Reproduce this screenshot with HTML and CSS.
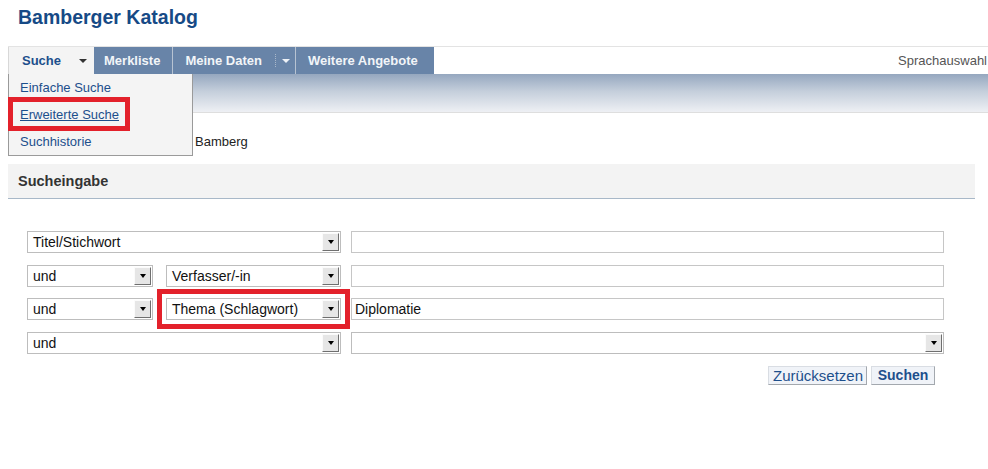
FILE: index.html
```html
<!DOCTYPE html>
<html lang="de">
<head>
<meta charset="utf-8">
<title>Bamberger Katalog</title>
<link rel="stylesheet" href="styles.css">
</head>
<body>
<div class="page">
  <header class="masthead">
    <h1 class="title">Bamberger Katalog</h1>
  </header>

  <nav class="nav">
    <div class="tab tab-active">
      <span class="tab-label">Suche</span><span class="caret caret-dark"></span>
      <ul class="menu">
        <li class="menu-item"><a href="#">Einfache Suche</a></li>
        <li class="menu-item menu-marked"><a href="#" class="menu-current">Erweiterte Suche</a></li>
        <li class="menu-item"><a href="#">Suchhistorie</a></li>
      </ul>
    </div>
    <div class="tab tab-merk"><span class="tab-label">Merkliste</span></div>
    <div class="tab tab-daten"><span class="tab-label">Meine Daten</span><span class="split-sep"></span><span class="caret caret-light"></span></div>
    <div class="tab tab-weitere"><span class="tab-label">Weitere Angebote</span></div>
    <div class="lang">Sprachauswahl</div>
  </nav>

  <div class="band"></div>

  <div class="crumb">Bamberg</div>

  <section class="panel">
    <h2 class="panel-head">Sucheingabe</h2>
    <div class="form-grid">
      <div class="select sel-wide"><span class="sel-text">Titel/Stichwort</span><span class="sel-btn"><span class="tri"></span></span></div>
      <div class="field"></div>

      <div class="select sel-op"><span class="sel-text">und</span><span class="sel-btn"><span class="tri"></span></span></div>
      <div class="select sel-cat"><span class="sel-text">Verfasser/-in</span><span class="sel-btn"><span class="tri"></span></span></div>
      <div class="field"></div>

      <div class="select sel-op"><span class="sel-text">und</span><span class="sel-btn"><span class="tri"></span></span></div>
      <div class="select sel-cat sel-marked"><span class="sel-text">Thema (Schlagwort)</span><span class="sel-btn"><span class="tri"></span></span></div>
      <div class="field">Diplomatie</div>

      <div class="select sel-wide"><span class="sel-text">und</span><span class="sel-btn"><span class="tri"></span></span></div>
      <div class="select sel-full"><span class="sel-text"></span><span class="sel-btn"><span class="tri"></span></span></div>
    </div>
    <div class="actions">
      <button class="btn btn-reset" type="button">Zurücksetzen</button>
      <button class="btn btn-search" type="button">Suchen</button>
    </div>
  </section>
</div>
</body>
</html>
```

FILE: styles.css
```css
*, *::before, *::after { box-sizing: border-box; }

html, body {
  margin: 0;
  padding: 0;
  background: #ffffff;
}

body {
  font-family: "Liberation Sans", Arial, sans-serif;
  font-size: 13px;
  color: #222;
  overflow: hidden;
}

.page {
  width: 988px;
}

/* Masthead */
.masthead {
  height: 46px;
  padding: 5px 0 0 18px;
}

.title {
  margin: 0;
  font-size: 19.5px;
  line-height: 24px;
  font-weight: bold;
  color: #164a86;
}

/* Navigation */
.nav {
  margin-left: 8px;
  height: 28px;
  border-top: 1px solid #e3e3e3;
  display: flex;
  align-items: stretch;
  position: relative;
  z-index: 5;
}

.tab {
  display: flex;
  align-items: center;
  height: 27px;
  background: #6884a8;
  color: #f2f5f8;
  font-weight: bold;
  font-size: 13px;
  white-space: nowrap;
  position: relative;
}

.tab-active {
  background: #f4f4f4;
  color: #1d4f8c;
  padding: 0 7px 0 13px;
  border-left: 1px solid #d8d8d8;
}

.tab-active .caret { margin-left: 18px; }

.tab-merk {
  padding: 0 12px 0 10px;
}

.tab-daten {
  border-left: 1px solid #b7c3d2;
  padding: 0 5px 0 12px;
}

.tab-weitere {
  border-left: 1px solid #b7c3d2;
  padding: 0 16px 0 12px;
}

.caret {
  width: 0;
  height: 0;
  border-left: 4px solid transparent;
  border-right: 4px solid transparent;
  border-top: 4px solid #333;
}

.caret-light {
  border-top-color: #eef2f7;
  margin-left: 6px;
}

.split-sep {
  width: 0;
  height: 13px;
  margin-left: 13px;
  border-left: 1px dotted #a9b8ca;
}

.lang {
  margin-left: auto;
  padding-right: 1px;
  align-self: center;
  font-weight: normal;
  color: #555;
  font-size: 13px;
}

/* Dropdown menu */
.menu {
  position: absolute;
  top: 27px;
  left: -1px;
  width: 185px;
  margin: 0;
  padding: 0;
  list-style: none;
  background: #f4f4f4;
  border: 1px solid #9a9a9a;
  border-top: none;
  font-weight: normal;
}

.menu-item {
  position: relative;
  height: 27px;
  line-height: 27px;
  padding-left: 11px;
}

.menu-item a {
  color: #1d4f8c;
  text-decoration: none;
  font-size: 13px;
}

.menu-item a.menu-current {
  text-decoration: underline;
}

.menu-marked::after {
  content: "";
  position: absolute;
  left: -1px;
  top: -4px;
  width: 122px;
  height: 34px;
  border: 5px solid #e3212b;
  pointer-events: none;
}

/* Gradient band */
.band {
  margin-left: 8px;
  height: 39px;
  background: linear-gradient(to bottom, #95a7bf 0%, #c4cedb 45%, #eef0f4 100%);
  border-bottom: 1px solid #dedede;
}

/* Breadcrumb */
.crumb {
  height: 51px;
  padding: 20px 0 0 195px;
  line-height: 17px;
  font-size: 13px;
  color: #222;
}

/* Panel */
.panel {
  margin-left: 8px;
  width: 967px;
}

.panel-head {
  margin: 0;
  height: 35px;
  line-height: 34px;
  padding-left: 10px;
  background: #f3f3f3;
  border-bottom: 1px solid #a8b8c8;
  font-size: 14.5px;
  font-weight: bold;
  color: #333;
}

.form-grid {
  display: grid;
  grid-template-columns: 139px 185px 593px;
  grid-auto-rows: 22px;
  row-gap: 11.67px;
  padding: 32px 0 0 19px;
}

.select {
  display: flex;
  align-items: stretch;
  height: 22px;
  background: #fff;
  border: 1px solid #bdbdbd;
  font-size: 14px;
  color: #111;
}

.sel-text {
  flex: 1;
  padding-left: 5px;
  line-height: 20px;
  white-space: nowrap;
  overflow: hidden;
}

.sel-btn {
  width: 17px;
  margin: 1px;
  background: #e6e6e6;
  border: 1px solid;
  border-color: #fbfbfb #6f6f6f #6f6f6f #fbfbfb;
  display: flex;
  align-items: center;
  justify-content: center;
}

.tri {
  width: 0;
  height: 0;
  border-left: 3.5px solid transparent;
  border-right: 3.5px solid transparent;
  border-top: 4px solid #000;
}

.sel-wide { grid-column: 1 / 3; width: 314px; }
.sel-op { width: 126px; }
.sel-cat { width: 175px; }
.sel-full { width: 593px; }

.sel-marked {
  outline: 5px solid #e3212b;
  outline-offset: 4px;
}

.field {
  height: 22px;
  width: 593px;
  border: 1px solid #c6c6c6;
  background: #fff;
  padding-left: 3px;
  line-height: 20px;
  font-size: 14px;
  color: #111;
}

.actions {
  display: flex;
  justify-content: flex-end;
  gap: 4px;
  margin-top: 12px;
  padding-right: 40px;
}

.btn {
  height: 19px;
  margin: 0;
  padding: 0 4px;
  font-family: "Liberation Sans", Arial, sans-serif;
  line-height: 17px;
  background: #f0f3f8;
  color: #1d4f8c;
  border: 1px solid;
  border-color: #d9dde3 #a3a8ae #a3a8ae #d9dde3;
  border-radius: 0;
}

.btn-reset {
  width: 99px;
  font-size: 15px;
}

.btn-search {
  width: 64px;
  font-size: 14px;
  font-weight: bold;
}
```
